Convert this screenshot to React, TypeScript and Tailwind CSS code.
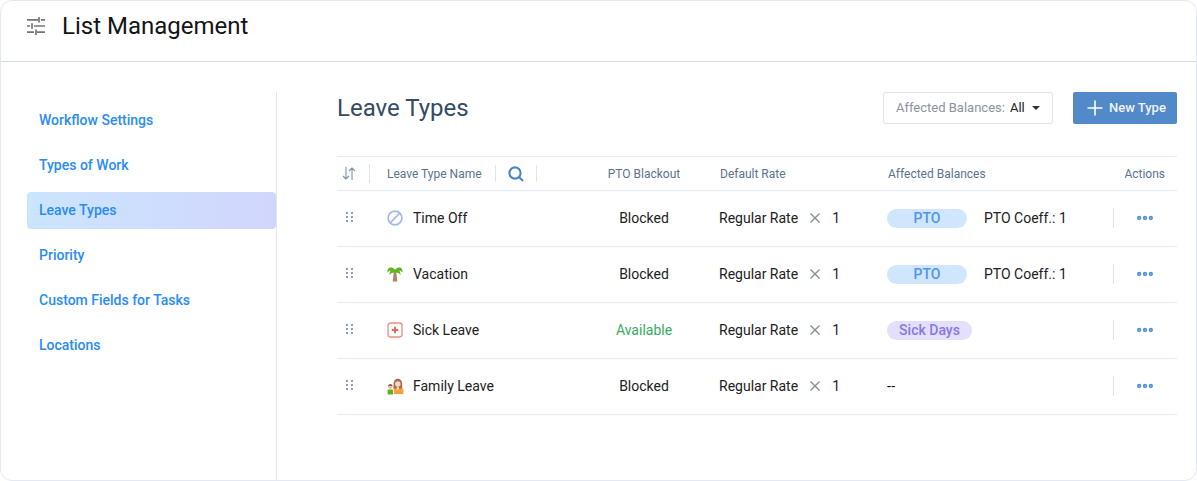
import React from 'react';
import { MoreHorizontal } from 'lucide-react';

const navItems = ['Workflow Settings', 'Types of Work', 'Leave Types', 'Priority', 'Custom Fields for Tasks', 'Locations'];

const gridCols = 'grid grid-cols-[50px_185px_144px_171px_226px_64px] items-center';

const BlockedIcon = () => (
  <svg width="16" height="16" viewBox="0 0 16 16" fill="none" stroke="#a3bbe3" strokeWidth="1.7">
    <circle cx="8" cy="8" r="6.900" />
    <path d="M3.400 12.600 12.600 3.400" />
  </svg>
);

const PalmIcon = () => (
  <svg width="16" height="16" viewBox="0 0 16 16">
    <path d="M6.800 6h2.400l1.100 9.500H5.700z" fill="#a58768" />
    <path d="M8 4C7 1.600 4.500.8 2.200 1.800 .9 2.500.4 4 .4 6.500c1.300-1.400 2.300-1.800 3.200-1.600-.8 1-1.200 2.400-1 4C4 7 6 6.200 8 6.600c2-.4 4 .4 5.400 2.300.2-1.600-.2-3-1-4 .9-.2 1.900.2 3.200 1.600 0-2.500-.5-4-1.800-4.700C11.500.8 9 1.600 8 4z" fill="#5eb71c" />
  </svg>
);

const SickIcon = () => (
  <svg width="16" height="16" viewBox="0 0 16 16" fill="none">
    <rect x="1" y="1" width="14" height="14" rx="2.400" stroke="#ea8f7c" strokeWidth="1.300" />
    <path d="M8 4.800v6.400M4.800 8h6.400" stroke="#e8694f" strokeWidth="2" />
  </svg>
);

const FamilyIcon = () => (
  <svg width="17" height="17" viewBox="0 0 17 17">
    <path d="M6.500 7C6.500 3 8 .8 10.800.8S15.200 3 15.200 7v4H6.500z" fill="#a5694f" />
    <circle cx="10.800" cy="6" r="2.800" fill="#f5d3bf" />
    <path d="M6.800 10.500h8.200c.8 0 1.400.6 1.400 1.400V16H6.800z" fill="#fb9d3f" />
    <path d="M9.700 8.500h2.200v2.800l-1.100.8-1.100-.8z" fill="#f5d3bf" />
    <circle cx="3.300" cy="8.700" r="2.200" fill="#e9c0a3" />
    <path d="M1.100 8.600c0-1.700 1-2.600 2.200-2.600s2.200.9 2.200 2.200c-1.400 0-3-.6-4.400.4z" fill="#8c5a42" />
    <rect x=".6" y="11.600" width="5.400" height="4.800" rx=".6" fill="#5fb01c" />
  </svg>
);

const rows = [
  { name: 'Time Off', icon: <BlockedIcon />, blackout: 'Blocked', balance: 'pto' },
  { name: 'Vacation', icon: <PalmIcon />, blackout: 'Blocked', balance: 'pto' },
  { name: 'Sick Leave', icon: <SickIcon />, blackout: 'Available', balance: 'sick' },
  { name: 'Family Leave', icon: <FamilyIcon />, blackout: 'Blocked', balance: 'none' },
];

const DragHandle = () => (
  <div className="ml-[9px] grid grid-cols-2 gap-x-[3px] gap-y-[2px] w-fit mb-[2px]">
    {[0, 1, 2, 3, 4, 5].map((i) => (
      <span key={i} className="w-[2px] h-[2px] bg-[#8b9dbd]" />
    ))}
  </div>
);

export default function App() {
  return (
    <div className="w-[1197px] h-[481px] bg-white overflow-hidden font-['Roboto',sans-serif]">
      <div className="w-[1197px] h-[481px] flex flex-col border border-[#e3e8f1] rounded-[12px] overflow-hidden">
        <header className="h-[61px] shrink-0 flex items-center pl-[25px] pb-[10px] border-b border-[#d5dbe5]">
          <svg width="20" height="20" viewBox="0 0 20 20" fill="none" stroke="#757575" strokeWidth="1.700">
            <path d="M1 3.800h11M15 3.800h4M13 1v5.600M1 10h3M8 10h11M6 7.200v5.600M1 16.200h7M11 16.200h8M10 13.400V19" />
          </svg>
          <h1 className="ml-[16px] text-[24px] leading-[30px] text-[#141414]">List Management</h1>
        </header>

        <div className="flex flex-1 min-h-0 pt-[30px]">
          <aside className="w-[276px] shrink-0 border-r border-[#e1e7f1] pt-[10px] pl-[26px] flex flex-col gap-[8px]">
            {navItems.map((item) =>
              <a
                key={item}
                className={`h-[37px] flex items-center pl-[12px] rounded-[4px] text-[14px] font-medium text-[#2a8cf5] ${
                  item === 'Leave Types' ? 'bg-gradient-to-r from-[#cbe5fe] to-[#d1d6fd]' : ''
                }`}
              >
                {item}
              </a>
            )}
          </aside>

          <main className="flex-1 pl-[60px] pr-[19px]">
            <div className="h-[64px] flex items-start justify-between">
              <h2 className="text-[24px] leading-[32px] text-[#354a64]">Leave Types</h2>
              <div className="flex gap-[20px]">
                <button className="w-[170px] h-[32px] flex items-center pl-[12px] border border-[#e2e5ea] rounded-[2px] text-[13px]">
                  <span className="text-[#8b93a3]">Affected Balances:</span>
                  <span className="ml-[5px] text-[#1a1a1a]">All</span>
                  <svg className="ml-[7px]" width="8" height="4" viewBox="0 0 8 4"><path d="M0 0h8L4 4z" fill="#333" /></svg>
                </button>
                <button className="w-[104px] h-[32px] flex items-center pl-[14px] bg-[#5189c9] rounded-[2px] text-[13px] font-medium text-[#eef4fb]">
                  <svg width="16" height="16" viewBox="0 0 16 16" stroke="#fff" strokeWidth="1.600"><path d="M8 .5v15M.5 8h15" /></svg>
                  <span className="ml-[6px]">New Type</span>
                </button>
              </div>
            </div>

            <div className={`${gridCols} h-[35px] border-y border-[#e4ebf5] text-[12px] text-[#5b7290]`}>
              <div className="flex items-center h-[19px] border-r border-[#dfe4ea] w-[33px]">
                <svg className="ml-[5px]" width="14" height="13" viewBox="0 0 14 13" fill="none" stroke="#7d92ac" strokeWidth="1.100">
                  <path d="M4 0v12M1 9l3 3 3-3M10 13V1M7 4l3-3 3 3" />
                </svg>
              </div>
              <div className="flex items-center">
                <span>Leave Type Name</span>
                <span className="ml-[13px] h-[17px] border-l border-[#dfe4ea]" />
                <svg className="ml-[12px]" width="16" height="16" viewBox="0 0 16 16" fill="none" stroke="#4a84c6" strokeWidth="2.100">
                  <circle cx="7" cy="7" r="5.600" />
                  <path d="M11 11l4 4" />
                </svg>
                <span className="ml-[12px] h-[17px] border-l border-[#dfe4ea]" />
              </div>
              <div className="text-center">PTO Blackout</div>
              <div className="pl-[4px]">Default Rate</div>
              <div className="pl-[1px]">Affected Balances</div>
              <div className="text-right pr-[12px]">Actions</div>
            </div>

            {rows.map((row) => (
              <div key={row.name} className={`${gridCols} h-[56px] border-b border-[#e4ebf5] text-[14px] text-[#212121] pb-[1px]`}>
                <DragHandle />
                <div className="flex items-center">
                  <span className="w-[26px] flex">{row.icon}</span>
                  <span>{row.name}</span>
                </div>
                <div className={`text-center ${row.blackout === 'Available' ? 'text-[#37ad62]' : ''}`}>{row.blackout}</div>
                <div className="pl-[3px] flex items-center">
                  <span>Regular Rate</span>
                  <svg className="ml-[12px]" width="10" height="10" viewBox="0 0 10 10" stroke="#808a99" strokeWidth="1.300"><path d="M.5.500l9 9M9.500.500l-9 9" /></svg>
                  <span className="ml-[12px]">1</span>
                </div>
                <div className="flex items-center">
                  {row.balance === 'pto' && (
                    <>
                      <span className="w-[80px] h-[19px] flex items-center justify-center rounded-full bg-[#cfe6fd] text-[#4f94ee] font-medium">PTO</span>
                      <span className="ml-[17px]">PTO Coeff.: 1</span>
                    </>
                  )}
                  {row.balance === 'sick' && (
                    <span className="w-[85px] h-[19px] flex items-center justify-center rounded-full bg-[#e4e0fc] text-[#8878e8] font-medium">Sick Days</span>
                  )}
                  {row.balance === 'none' && <span className="tracking-[0.5px] text-black">--</span>}
                </div>
                <div className="flex items-center h-[20px] border-l border-[#dfe2e6]">
                  <MoreHorizontal className="ml-[21px]" size={20} strokeWidth={3.200} color="#4f8fdc" />
                </div>
              </div>
            ))}
          </main>
        </div>
      </div>
    </div>
  );
}
